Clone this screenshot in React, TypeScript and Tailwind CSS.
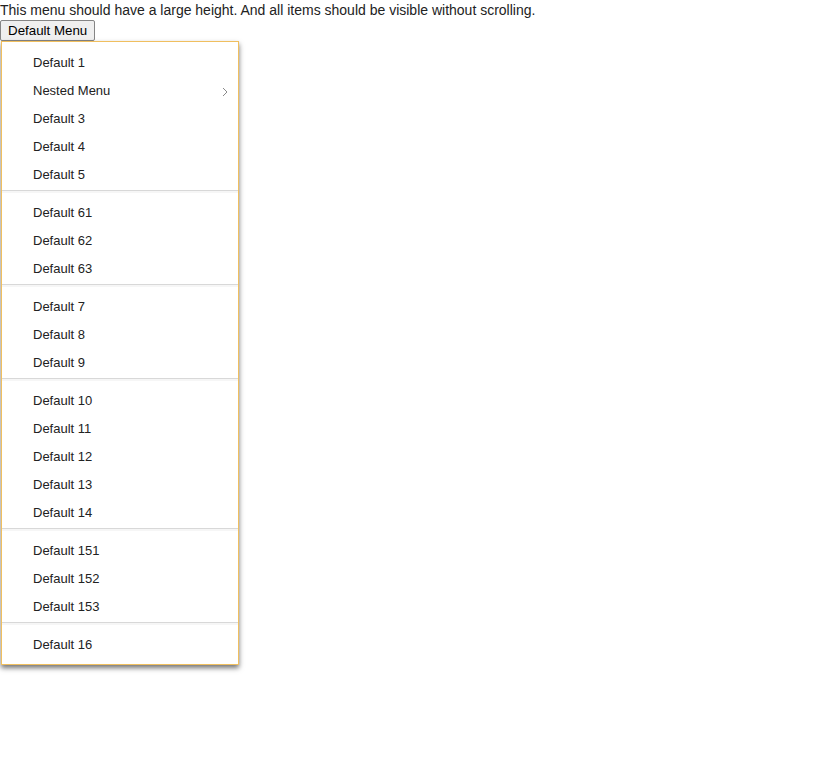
import React from "react";

type Entry = { label: string; nested?: boolean } | "sep";

const entries: Entry[] = [
  { label: "Default 1" },
  { label: "Nested Menu", nested: true },
  { label: "Default 3" },
  { label: "Default 4" },
  { label: "Default 5" },
  "sep",
  { label: "Default 61" },
  { label: "Default 62" },
  { label: "Default 63" },
  "sep",
  { label: "Default 7" },
  { label: "Default 8" },
  { label: "Default 9" },
  "sep",
  { label: "Default 10" },
  { label: "Default 11" },
  { label: "Default 12" },
  { label: "Default 13" },
  { label: "Default 14" },
  "sep",
  { label: "Default 151" },
  { label: "Default 152" },
  { label: "Default 153" },
  "sep",
  { label: "Default 16" },
];

export default function App() {
  return (
    <div className="bg-white min-h-[768px] text-[#222]" style={{ fontFamily: '"Liberation Sans", Arial, sans-serif' }}>
      <div className="text-[14px] leading-[20px] h-[20px] text-[#222]">
        This menu should have a large height. And all items should be visible without scrolling.
      </div>
      <button className="block h-[21px] px-[7px] text-[13.33px] leading-[15px] bg-[#efefef] border border-[#858585] rounded-[2px] text-black">
        Default Menu
      </button>
      <div className="ml-[1px] w-[238px] h-[624px] border border-[#f0bf5f] bg-white shadow-[0_3px_5px_rgba(0,0,0,0.55)] pt-[7px] pb-[5px] box-border">
        {entries.map((e, i) =>
          e === "sep" ? (
            <div key={i} className="h-[10px] pt-[1px]">
              <div className="h-[1px] bg-[#d8d8d8]" />
              <div className="h-[2px] bg-[#f6f6f6]" />
            </div>
          ) : (
            <div key={i} className="h-[28px] flex items-center pl-[31px] pr-[10px] text-[13px] text-[#222]">
              <span className="flex-1">{e.label}</span>
              {e.nested && (
                <svg width="6" height="10" viewBox="0 0 6 10" className="mt-[2px]">
                  <path d="M1 1 L5 5 L1 9" fill="none" stroke="#8a8a8a" strokeWidth="1" />
                </svg>
              )}
            </div>
          )
        )}
      </div>
    </div>
  );
}
